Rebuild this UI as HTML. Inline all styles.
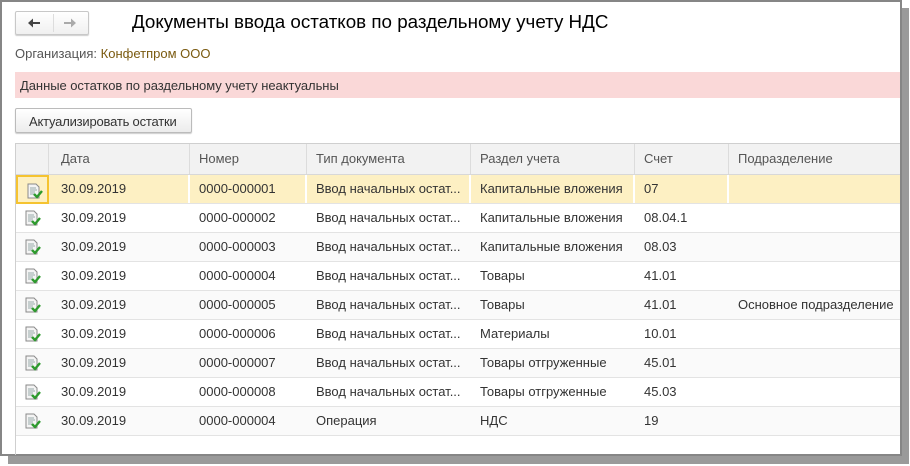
<!DOCTYPE html>
<html><head><meta charset="utf-8"><style>
*{margin:0;padding:0;box-sizing:border-box}
body{width:910px;height:466px;background:#fff;position:relative;overflow:hidden;font-family:"Liberation Sans",Arial,sans-serif;font-size:13px;color:#333}
.shadow-r{position:absolute;left:901px;top:8px;width:8px;height:456px;background:#9a9a9a}
.shadow-b{position:absolute;left:8px;top:455px;width:901px;height:9px;background:#9a9a9a}
.win{position:absolute;left:0;top:0;width:902px;height:456px;border:2px solid #868686;background:#fff}
.nav{position:absolute;left:15px;top:11px;width:74px;height:24px;border:1px solid #c8c8c8;border-radius:2px;background:linear-gradient(#fff,#f0f0f0);box-shadow:0 1px 1px #ccc}
.nav .d{position:absolute;left:37px;top:2px;width:1px;height:18px;background:#ddd}
.title{position:absolute;left:132px;top:11px;font-size:18.8px;color:#000}
.org{position:absolute;left:15px;top:46px;color:#555}
.org span{color:#7a5a10}
.warn{position:absolute;left:15px;top:72px;width:885px;height:26px;background:#fad8d8;padding:6px 0 0 5px;letter-spacing:-0.05px}
.btn{position:absolute;left:15px;top:108px;width:177px;height:25px;border:1px solid #bbb;border-radius:2px;background:linear-gradient(#fff,#ececec);padding:5px 0 0 13px;box-shadow:0 1px 1px #ccc;letter-spacing:-0.2px}
.tbl{position:absolute;left:15px;top:143px;width:885px;height:312px;border-left:1px solid #cfcfcf;border-top:1px solid #cfcfcf}
.row{position:absolute;left:0;width:884px;height:29px;border-bottom:1px solid #e3e3e3}
.row div{position:absolute;top:0;height:28px;line-height:28px;white-space:nowrap}
.hdr{top:0;height:31px;background:#f2f2f2;border-bottom:1px solid #d8d8d8}
.hdr div{height:30px;line-height:30px;border-right:1px solid #dcdcdc;color:#555}
.sel{background:#fdf0c3}
.sel div{border-right:2px solid #fff}
.g{background:#fafafa}
.ic{position:absolute;left:8px;top:6px}
</style></head><body>
<div class="shadow-r"></div><div class="shadow-b"></div>
<div class="win"></div>
<div class="nav"><div class="d"></div>
<svg style="position:absolute;left:11px;top:5px" width="14" height="12"><path d="M1 6L6 1.5V5H13V7H6V10.5Z" fill="#444"/></svg>
<svg style="position:absolute;left:47px;top:5px" width="14" height="12"><path d="M13 6L8 1.5V5H1V7H8V10.5Z" fill="#aaa"/></svg>
</div>
<div class="title">Документы ввода остатков по раздельному учету НДС</div>
<div class="org">Организация: <span>Конфетпром ООО</span></div>
<div class="warn">Данные остатков по раздельному учету неактуальны</div>
<div class="btn">Актуализировать остатки</div>
<div class="tbl">
<div class="row hdr"><div style="left:0;width:33px"></div><div style="left:33px;width:141px;padding-left:12px">Дата</div><div style="left:174px;width:117px;padding-left:9px">Номер</div><div style="left:291px;width:164px;padding-left:9px">Тип документа</div><div style="left:455px;width:164px;padding-left:9px">Раздел учета</div><div style="left:619px;width:94px;padding-left:9px">Счет</div><div style="left:713px;width:171px;padding-left:9px;border-right:none">Подразделение</div></div>
</div>
<script>
var d=[["0000-000001","Ввод начальных остат...","Капитальные вложения","07",""],["0000-000002","Ввод начальных остат...","Капитальные вложения","08.04.1",""],["0000-000003","Ввод начальных остат...","Капитальные вложения","08.03",""],["0000-000004","Ввод начальных остат...","Товары","41.01",""],["0000-000005","Ввод начальных остат...","Товары","41.01","Основное подразделение"],["0000-000006","Ввод начальных остат...","Материалы","10.01",""],["0000-000007","Ввод начальных остат...","Товары отгруженные","45.01",""],["0000-000008","Ввод начальных остат...","Товары отгруженные","45.03",""],["0000-000004","Операция","НДС","19",""]];
var ic='<svg class="ic" width="18" height="17"><path d="M2 1H10L13 4V15H2Z" fill="#f4f4f4" stroke="#8a8a8a"/><path d="M4 5H10M4 7H11M4 9H9M4 11H8" stroke="#9aa"/><path d="M8 11L11 14L16 8" stroke="#2d9a2d" stroke-width="2.4" fill="none"/></svg>';
var h='';
d.forEach(function(r,i){var c=i==0?'row sel':(i%2==0?'row g':'row');
h+='<div class="'+c+'" style="top:'+(31+i*29)+'px"><div style="left:0;width:33px;'+(i==0?'border:2px solid #f5c330;height:29px;':'')+'">'+ic+'</div><div style="left:33px;width:141px;padding-left:12px">30.09.2019</div><div style="left:174px;width:117px;padding-left:9px">'+r[0]+'</div><div style="left:291px;width:164px;padding-left:9px">'+r[1]+'</div><div style="left:455px;width:164px;padding-left:9px">'+r[2]+'</div><div style="left:619px;width:94px;padding-left:9px">'+r[3]+'</div><div style="left:713px;width:171px;padding-left:9px;border-right:none">'+r[4]+'</div></div>';});
document.querySelector('.tbl').insertAdjacentHTML('beforeend',h);
</script>
</body></html>
